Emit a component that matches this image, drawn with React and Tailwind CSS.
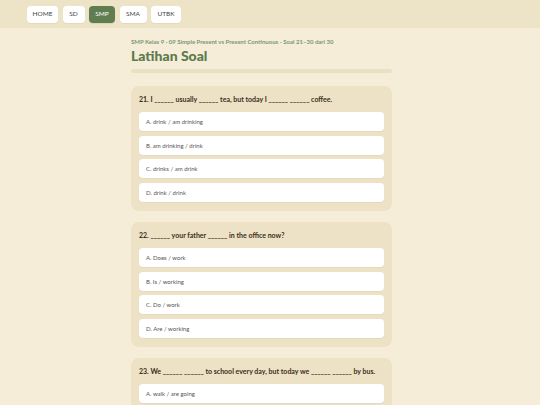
import React from "react";

const questions = [
  {
    q: "21. I ______ usually ______ tea, but today I ______ ______ coffee.",
    opts: ["A. drink / am drinking", "B. am drinking / drink", "C. drinks / am drink", "D. drink / drink"],
  },
  {
    q: "22. ______ your father ______ in the office now?",
    opts: ["A. Does / work", "B. Is / working", "C. Do / work", "D. Are / working"],
  },
  {
    q: "23. We ______ ______ to school every day, but today we ______ ______ by bus.",
    opts: ["A. walk / are going", "B. walk / go", "C. walks / are go", "D. walking / going"],
  },
];

const navs = [
  { n: "HOME", w: "w-[31px]" },
  { n: "SD", w: "w-[22px]" },
  { n: "SMP", w: "w-[26px]" },
  { n: "SMA", w: "w-[27px]" },
  { n: "UTBK", w: "w-[30px]" },
];

export default function App() {
  return (
    <div
      className="h-[405px] overflow-hidden bg-[#f5edd8]"
      style={{ fontFamily: "Lato, 'Open Sans', sans-serif" }}
    >
      <header className="h-[28px] bg-[#ede3c7] flex items-center gap-[4.5px] pl-[27px]">
        {navs.map(({ n, w }) => (
          <div
            key={n}
            className={
              n === "SMP"
                ? `${w} h-[17px] flex items-center justify-center rounded-[4px] bg-[#5f7d51] text-white text-[6.5px] shadow-[0_1px_1px_rgba(0,0,0,0.08)]`
                : `${w} h-[17px] flex items-center justify-center rounded-[4px] bg-white text-[#444] text-[6.5px] shadow-[0_1px_1px_rgba(0,0,0,0.05)]`
            }
          >
            {n}
          </div>
        ))}
      </header>
      <main className="w-[261px] ml-[131px] pt-[10px]">
        <div className="text-[6px] font-bold text-[#7b9a6c] leading-[8px]">
          SMP Kelas 9 · 09 Simple Present vs Present Continuous - Soal 21–30 dari 30
        </div>
        <h1 className="text-[14px] font-black text-[#5b7a4d] leading-[16px] mt-[2px]">Latihan Soal</h1>
        <div className="h-[4px] rounded-full bg-[#ebe0c4] mt-[5px]"></div>
        <div className="flex flex-col gap-[11px] mt-[13px]">
          {questions.map((item) => (
            <section key={item.q} className="rounded-[8px] bg-[#ede2c5] px-[8px] pt-[8px] pb-[9px]">
              <div className="text-[7px] font-bold text-[#3b2f20] leading-[10px]">{item.q}</div>
              <div className="flex flex-col gap-[4.7px] mt-[8px]">
                {item.opts.map((o) => (
                  <div
                    key={o}
                    className="h-[19px] rounded-[4px] bg-white flex items-center px-[7px] text-[6px] text-[#555] shadow-[0_1px_1px_rgba(0,0,0,0.04)]"
                  >
                    {o}
                  </div>
                ))}
              </div>
            </section>
          ))}
        </div>
      </main>
    </div>
  );
}
